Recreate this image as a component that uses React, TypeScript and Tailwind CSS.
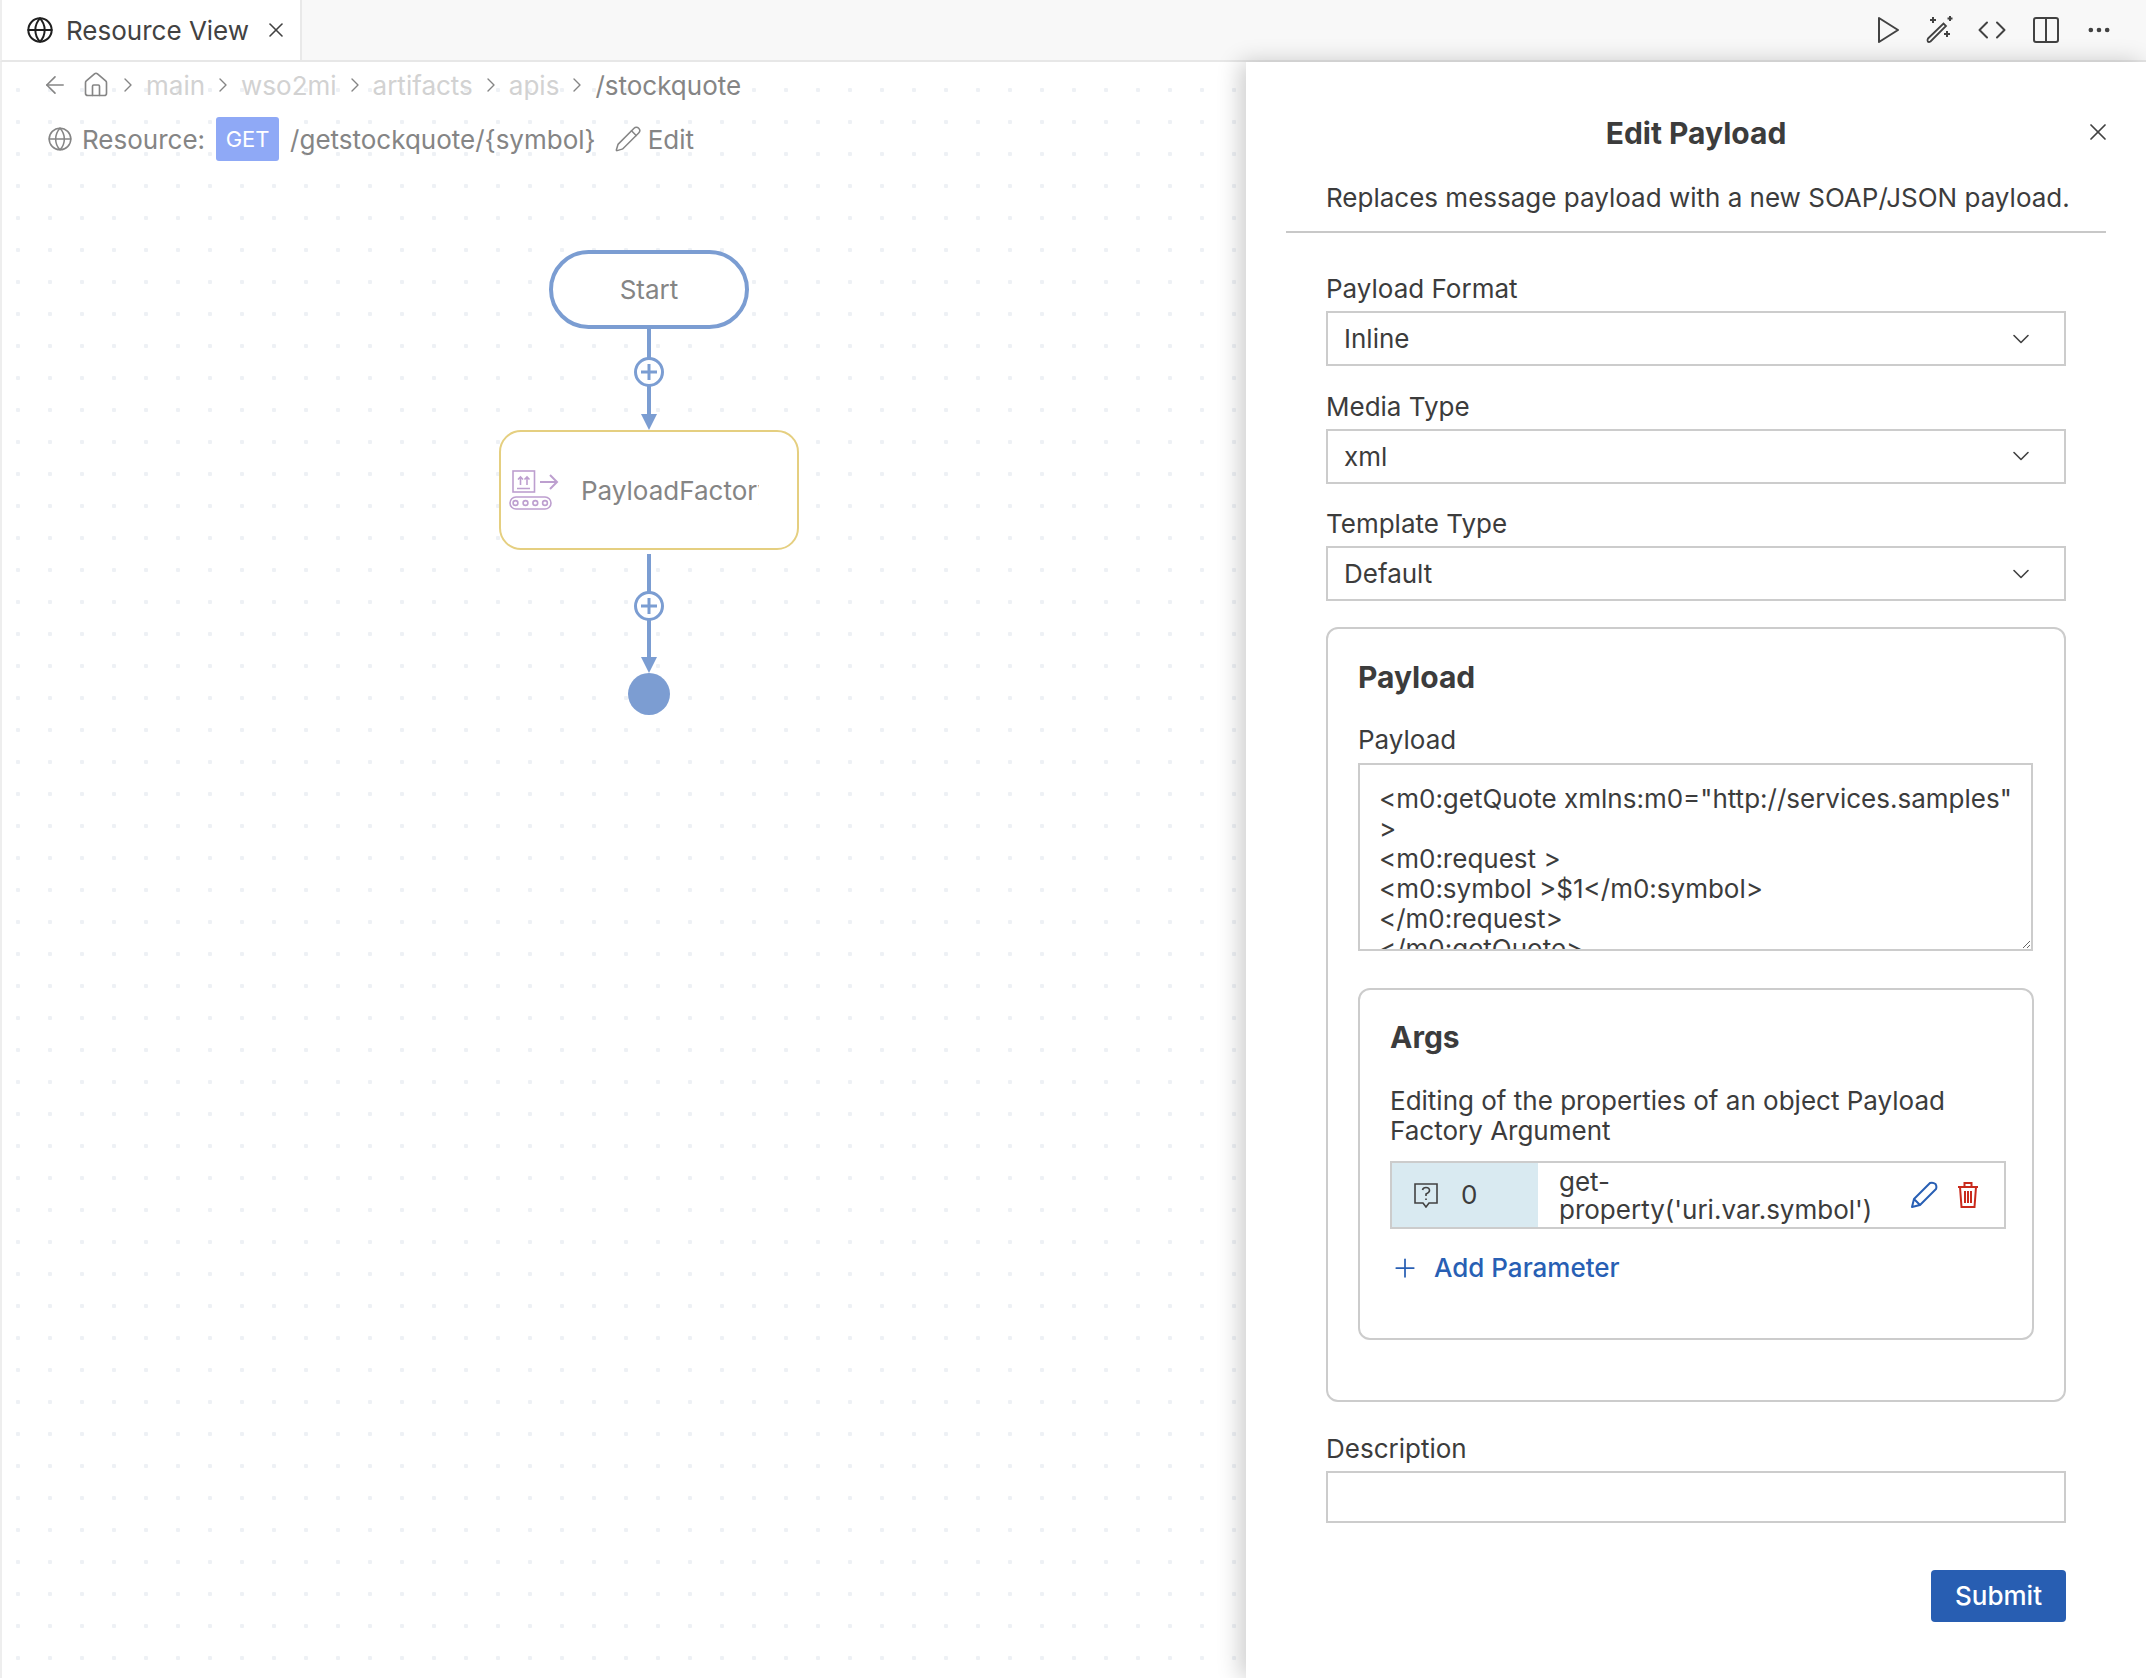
import { ArrowLeft, ChevronDown, ChevronRight, Code, Ellipsis, Globe, House, Pencil, Plus, X } from "lucide-react";

const crumbs = ["main", "wso2mi", "artifacts", "apis"];

const payloadXml = `<m0:getQuote xmlns:m0="http://services.samples"
>
<m0:request >
<m0:symbol >$1</m0:symbol>
</m0:request>
</m0:getQuote>`;

function SelectField({ label, value }: { label: string; value: string }) {
  return (
    <div className="mb-[25.5px]">
      <p className="h-[30px] leading-[30px] mb-[7px]">{label}</p>
      <div className="flex items-center justify-between h-[55px] border-2 border-[#cccccc] pl-[16px] pr-[29px] bg-white">
        <span>{value}</span>
        <ChevronDown size={28} strokeWidth={1.4} className="text-[#424242]" />
      </div>
    </div>
  );
}

function Connector({ height, plusY }: { height: number; plusY: number }) {
  return (
    <svg width="40" height={height} viewBox={`0 0 40 ${height}`} className="block">
      <line x1="20" y1="0" x2="20" y2={height - 12} stroke="#7b9dd2" strokeWidth="4" />
      <path d={`M12 ${height - 16} H28 L20 ${height} Z`} fill="#7b9dd2" />
      <circle cx="20" cy={plusY} r="13.5" fill="#ffffff" stroke="#7b9dd2" strokeWidth="3" />
      <path d={`M12 ${plusY} H28 M20 ${plusY - 8} V${plusY + 8}`} stroke="#7b9dd2" strokeWidth="3" />
    </svg>
  );
}

function MediatorIcon() {
  return (
    <svg width="50" height="40" viewBox="0 0 50 40" fill="none" stroke="#bd9fcf" strokeWidth="1.6" className="shrink-0">
      <rect x="4" y="1" width="21.5" height="21" />
      <path d="M8 18.5 H21 M11.5 15 V7 M9 9.5 L11.5 7 L14 9.5 M18 15 V7 M15.5 9.5 L18 7 L20.5 9.5" />
      <path d="M31 12 H48 M41 5 L48 12 L41 19" strokeWidth="2" />
      <rect x="1" y="27" width="41" height="12" rx="6" />
      <circle cx="6.5" cy="33" r="2.4" />
      <circle cx="16.5" cy="33" r="2.4" />
      <circle cx="26.3" cy="33" r="2.4" />
      <circle cx="36" cy="33" r="2.4" />
    </svg>
  );
}

export default function App() {
  return (
    <div className="w-[2146px] h-[1678px] overflow-hidden flex flex-col bg-white text-[26px] text-[#3c3c3c] font-['Inter',sans-serif]">
      {/* Barra de abas */}
      <div className="flex items-stretch justify-between h-[62px] shrink-0 bg-[#f8f8f8] border-b-2 border-[#e7e7e7] border-l-2 border-l-[#eeeeee]">
        <div className="flex items-center w-[300px] h-[60px] bg-white border-r-2 border-[#e9e9e9] pl-[24px]">
          <Globe size={28} strokeWidth={1.7} className="text-[#1f1f1f]" />
          <span className="ml-[12px] text-[#424242]">Resource View</span>
          <X size={24} strokeWidth={1.6} className="ml-[15px] text-[#424242]" />
        </div>
        <div className="flex items-center pr-[33px] text-[#424242]">
          <svg width="24" height="28" viewBox="0 0 24 28" fill="none" stroke="currentColor" strokeWidth="2" strokeLinejoin="round">
            <path d="M3 2 L22 14 L3 26 Z" />
          </svg>
          <svg width="30" height="30" viewBox="0 0 30 30" fill="none" stroke="currentColor" strokeWidth="1.8" className="ml-[25px]">
            <path d="M3 23.5 L18.5 8.5 L21 11 L5.5 26.5 Q3.8 27.5 2.8 26.5 Q2 25.3 3 23.5 Z" />
            <path d="M8 2 V8 M5 5 H11 M25 1 V6 M22.5 3.5 H27.5 M22 16 V22 M19 19 H25" strokeWidth="2" />
          </svg>
          <Code size={30} strokeWidth={1.6} className="ml-[22px]" />
          <svg width="28" height="28" viewBox="0 0 28 28" fill="none" stroke="currentColor" strokeWidth="2" className="ml-[25px]">
            <rect x="2" y="2" width="24" height="24" rx="2" />
            <path d="M14 2 V26" />
          </svg>
          <Ellipsis size={28} strokeWidth={2} className="ml-[25px]" />
        </div>
      </div>

      <div className="flex flex-1 min-h-0">
        {/* Canvas */}
        <div className="flex-1 min-w-0 border-l-2 border-[#eeeeee] bg-[radial-gradient(#eef1f5_2px,transparent_2.5px)] bg-[size:32px_32px] bg-[position:0px_12px]">
          <div className="flex items-center h-[46px] pl-[39px] text-[#d2d2d2]">
            <ArrowLeft size={28} strokeWidth={1.4} className="text-[#858585]" />
            <House size={28} strokeWidth={1.4} className="ml-[13px] text-[#858585]" />
            {crumbs.map((c) => (
              <div key={c} className="flex items-center">
                <ChevronRight size={24} strokeWidth={1.4} className="mx-[6px] text-[#858585]" />
                <span>{c}</span>
              </div>
            ))}
            <ChevronRight size={24} strokeWidth={1.4} className="mx-[6px] text-[#858585]" />
            <span className="text-[#858585]">/stockquote</span>
          </div>
          <div className="flex items-center h-[44px] mt-[9px] pl-[45px] text-[#858585]">
            <Globe size={26} strokeWidth={1.4} />
            <span className="ml-[9px]">Resource:</span>
            <span className="flex items-center justify-center w-[63px] h-[44px] ml-[11px] rounded-[3px] bg-[#8fa9f6] text-white text-[22px]">GET</span>
            <span className="ml-[11px]">/getstockquote/{"{symbol}"}</span>
            <Pencil size={28} strokeWidth={1.3} className="ml-[18px]" />
            <span className="ml-[6px]">Edit</span>
          </div>

          {/* Diagrama */}
          <div className="flex flex-col items-center w-[300px] ml-[497px] mt-[89px]">
            <div className="flex items-center justify-center w-[200px] h-[79px] rounded-[40px] border-[4px] border-[#7b9dd2] bg-white text-[#858585]">
              Start
            </div>
            <Connector height={101} plusY={43} />
            <div className="flex items-center w-[300px] h-[120px] rounded-[22px] border-2 border-[#e5cf80] bg-white pl-[8px]">
              <MediatorIcon />
              <span className="ml-[22px] w-[178px] overflow-hidden whitespace-nowrap text-[#858585]">PayloadFactory</span>
            </div>
            <div className="h-[4px]" />
            <Connector height={119} plusY={52} />
            <div className="w-[42px] h-[42px] rounded-full bg-[#7c9dd2]" />
          </div>
        </div>

        {/* Painel lateral */}
        <div className="w-[900px] shrink-0 bg-white px-[40px] shadow-[-6px_0_22px_rgba(0,0,0,0.2)] z-10">
          <div className="relative h-[171px] border-b-2 border-[#c8c8c8]">
            <h2 className="pt-[51px] text-center text-[30px] leading-[40px] font-bold">Edit Payload</h2>
            <X size={28} strokeWidth={1.5} className="absolute right-[-6px] top-[56px] text-[#424242]" />
            <p className="mt-[30px] ml-[40px] leading-[30px] whitespace-nowrap">Replaces message payload with a new SOAP/JSON payload.</p>
          </div>

          <div className="px-[40px] pt-[41px]">
            <SelectField label="Payload Format" value="Inline" />
            <SelectField label="Media Type" value="xml" />
            <SelectField label="Template Type" value="Default" />

            <div className="mt-[5px] h-[775px] rounded-[12px] border-2 border-[#cccccc] px-[30px] pt-[28px]">
              <h3 className="text-[30px] leading-[40px] font-bold">Payload</h3>
              <p className="mt-[28px] leading-[30px]">Payload</p>
              <textarea
                readOnly
                value={payloadXml}
                className="block w-[675px] h-[188px] mt-[8px] border-2 border-[#cccccc] px-[19px] pt-[19px] leading-[30px] resize-y overflow-hidden outline-none"
              />

              <div className="mt-[37px] h-[352px] rounded-[12px] border-2 border-[#cccccc] pl-[30px] pr-[26px] pt-[27px]">
                <h3 className="text-[30px] leading-[40px] font-bold">Args</h3>
                <p className="mt-[29px] leading-[30px]">Editing of the properties of an object Payload Factory Argument</p>
                <div className="flex items-stretch h-[68px] mt-[15px] border-2 border-[#cccccc]">
                  <div className="flex items-center w-[146px] shrink-0 bg-[#d9eaf1] pl-[21px]">
                    <svg width="26" height="26" viewBox="0 0 26 26" fill="none" stroke="#424242" strokeWidth="1.6">
                      <path d="M2 2 H24 V21 H16 L13 25 L10 21 H2 Z" />
                      <path d="M9.5 8 Q10 5.5 13 5.5 Q16.5 5.5 16.5 8.5 Q16.5 10.5 13 12 V14 M13 16.5 V18" />
                    </svg>
                    <span className="ml-[22px]">0</span>
                  </div>
                  <div className="flex-1 pl-[21px] leading-[28px] pt-[5px]">
                    get-
                    <br />
                    property('uri.var.symbol')
                  </div>
                  <div className="flex items-center pr-[25px]">
                    <svg width="28" height="28" viewBox="0 0 28 28" fill="none" stroke="#285fb4" strokeWidth="2" strokeLinejoin="round">
                      <path d="M2 26 L4 18 L20 2 Q23 1 25.5 3 Q27 5.5 26 8 L10 24 Z M4 18 L10 24" />
                    </svg>
                    <svg width="22" height="28" viewBox="0 0 22 28" fill="none" stroke="#c92a1c" strokeWidth="2" className="ml-[19px]">
                      <path d="M1 6 H21 M7.5 6 V2 H14.5 V6 M3 6 L4.5 26 H17.5 L19 6 M8 10 V22 M11 10 V22 M14 10 V22" />
                    </svg>
                  </div>
                </div>
                <div className="flex items-center mt-[24px] h-[30px] text-[#285fb4] font-medium">
                  <Plus size={30} strokeWidth={1.4} />
                  <span className="ml-[14px]">Add Parameter</span>
                </div>
              </div>
            </div>

            <p className="mt-[32px] h-[30px] leading-[30px]">Description</p>
            <div className="mt-[7px] h-[52px] border-2 border-[#cccccc]" />
            <div className="flex justify-end mt-[47px]">
              <button className="w-[135px] h-[52px] rounded-[4px] bg-[#285eb2] text-white font-medium">Submit</button>
            </div>
          </div>
        </div>
      </div>
    </div>
  );
}
